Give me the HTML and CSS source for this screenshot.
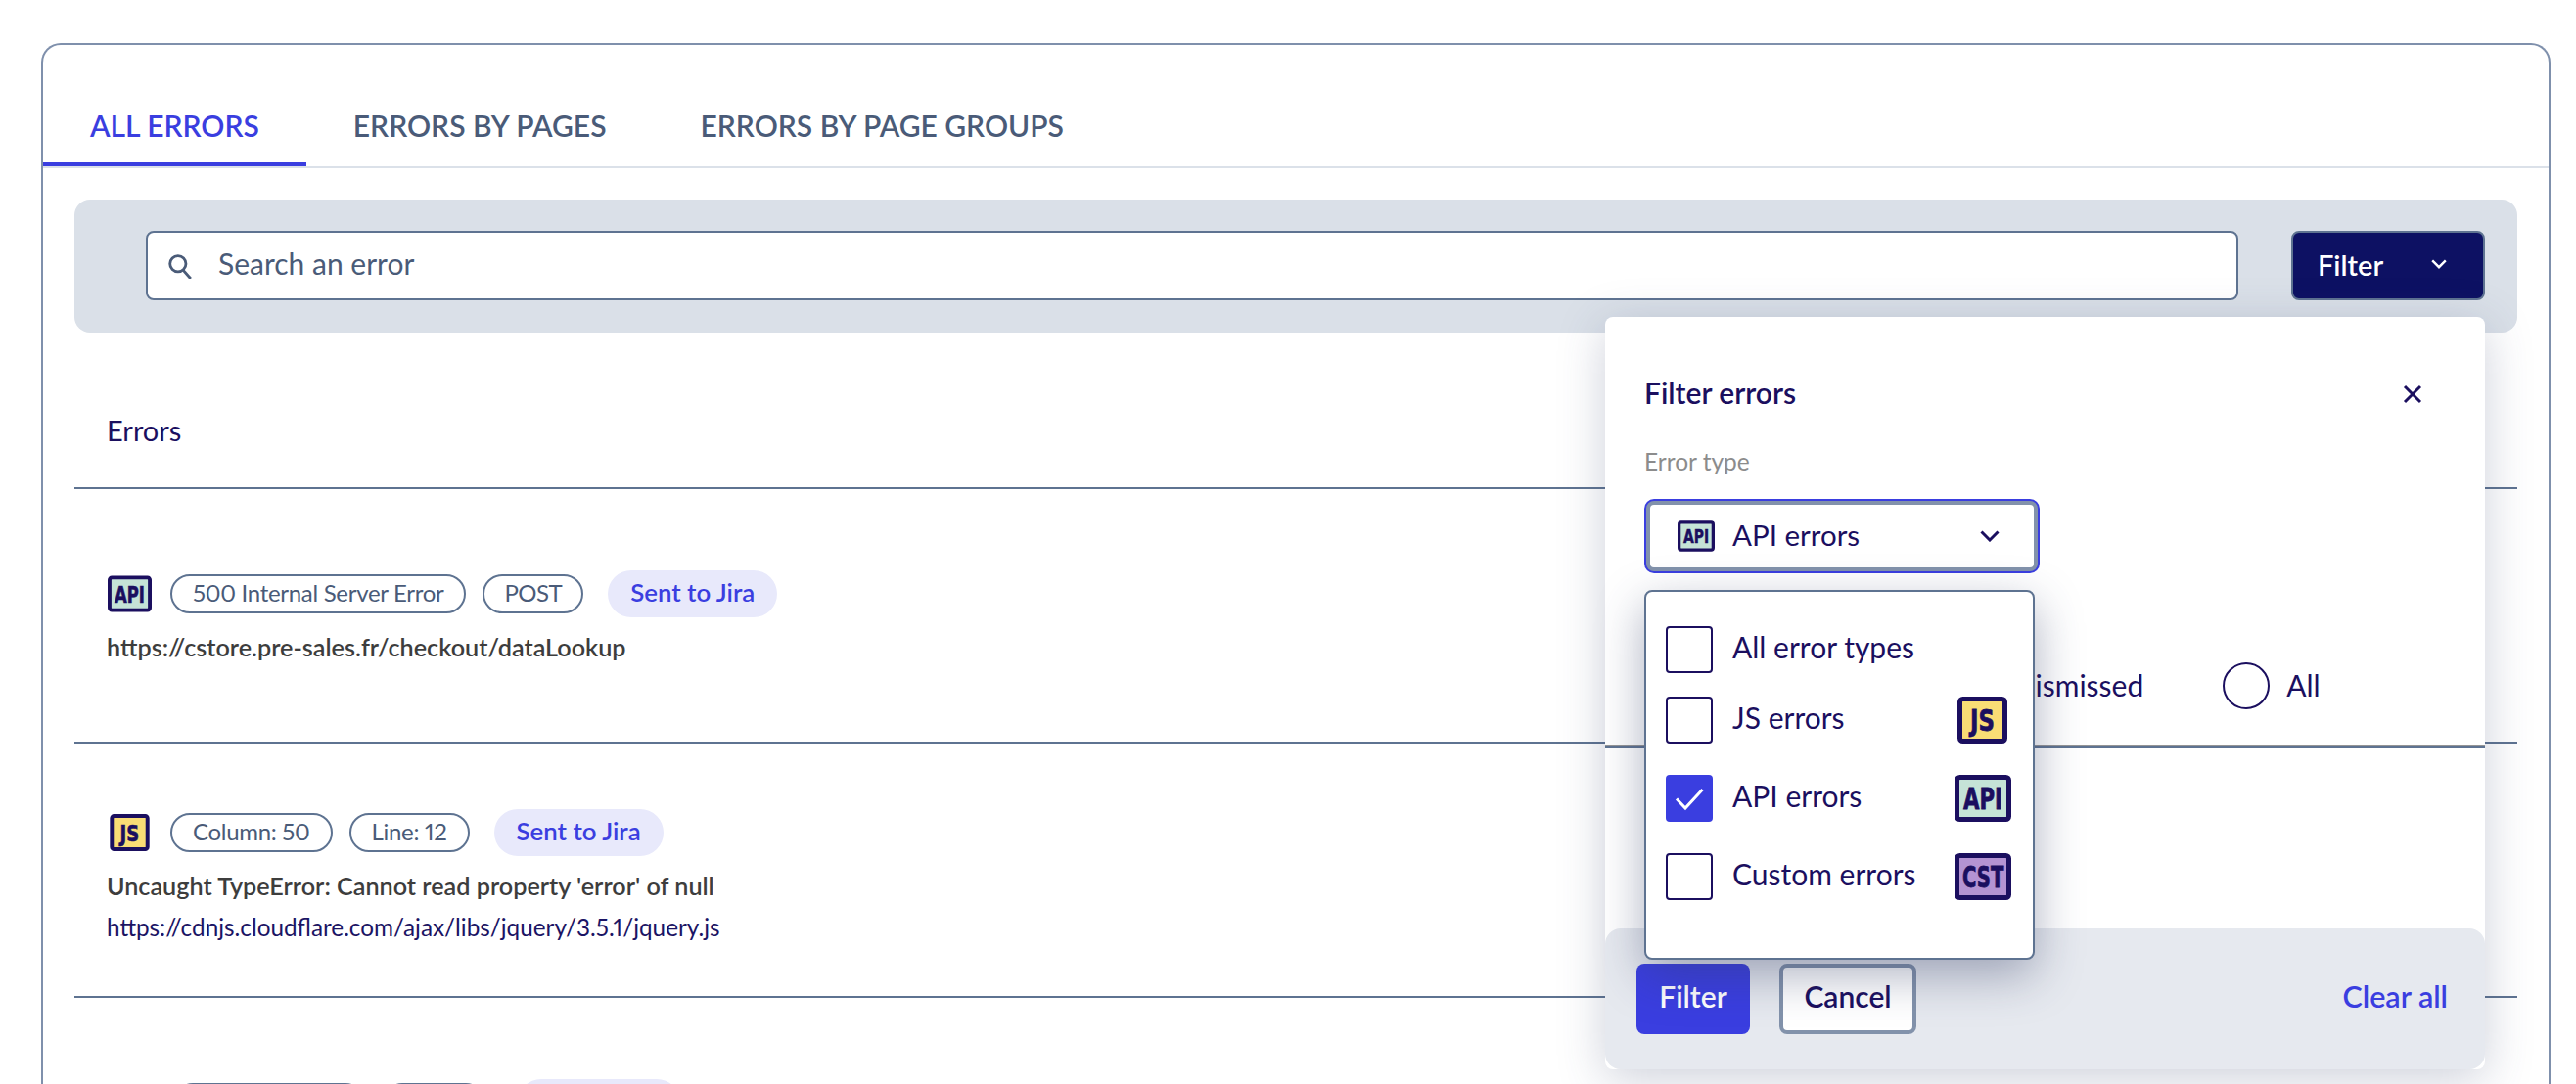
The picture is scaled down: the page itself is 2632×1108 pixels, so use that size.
FILE: index.html
```html
<!DOCTYPE html>
<html lang="en">
<head>
  <meta charset="UTF-8" />
  <title>Errors</title>
  <link rel="stylesheet" href="styles.css">
</head>
<body>
  <div class="card">
    <div class="tabs">
      <a class="tab active">ALL ERRORS</a>
      <a class="tab">ERRORS BY PAGES</a>
      <a class="tab">ERRORS BY PAGE GROUPS</a>
    </div>

    <div class="search-band">
      <div class="search-input">
        <svg class="search-icon" viewBox="0 0 24 24"><circle cx="10" cy="10" r="7.5" fill="none" stroke="currentColor" stroke-width="2.6"/><path d="M15 16l7 8" fill="none" stroke="currentColor" stroke-width="2.6"/></svg>
        <span class="search-text">Search an error</span>
      </div>
      <button class="filter-toggle">
        <span>Filter</span>
        <svg class="filter-chevron" viewBox="0 0 20 12"><path d="M1.5 1.5l8.5 8.5 8.5-8.5" fill="none" stroke="currentColor" stroke-width="3"/></svg>
      </button>
    </div>

    <div class="errors-title">Errors</div>

    <div class="error-row">
      <div class="error-tags">
        <svg class="type-badge badge-row" viewBox="0 0 58 48">
          <rect class="badge-api" x="2.5" y="2.5" width="53" height="43" rx="3"/>
          <text class="badge-text" transform="translate(9 35) scale(.71 1)">API</text>
        </svg>
        <span class="chip">500 Internal Server Error</span>
        <span class="chip chip-post">POST</span>
        <span class="jira">Sent to Jira</span>
      </div>
      <div class="error-message">https://cstore.pre-sales.fr/checkout/dataLookup</div>
    </div>

    <div class="error-row error-row-detail">
      <div class="error-tags">
        <svg class="type-badge badge-row badge-row-js" viewBox="0 0 51 48">
          <rect class="badge-js" x="2.5" y="2.5" width="46" height="43" rx="3"/>
          <text class="badge-text" transform="translate(13 35) scale(.76 1)">JS</text>
        </svg>
        <span class="chip">Column: 50</span>
        <span class="chip">Line: 12</span>
        <span class="jira">Sent to Jira</span>
      </div>
      <div class="error-message">Uncaught TypeError: Cannot read property 'error' of null</div>
      <div class="error-url">https://cdnjs.cloudflare.com/ajax/libs/jquery/3.5.1/jquery.js</div>
    </div>

    <!-- next row is cut by the window, only the tops of its tags show -->
    <div class="error-row">
      <div class="error-tags error-tags-cut">
        <span class="chip chip-long"></span>
        <span class="chip chip-short"></span>
        <span class="jira jira-cut"></span>
      </div>
    </div>
  </div>

  <!-- Filter panel, opened from the Filter button -->
  <div class="filter-panel">
    <div class="panel-body">
      <div class="panel-head">
        <span class="panel-title">Filter errors</span>
        <svg class="panel-close" viewBox="0 0 20 20"><path d="M2 2l16 16M18 2L2 18" fill="none" stroke="currentColor" stroke-width="3"/></svg>
      </div>
      <div class="field-label">Error type</div>
      <div class="select-box">
        <svg class="type-badge badge-select" viewBox="0 0 58 48">
          <rect class="badge-api" x="2.5" y="2.5" width="53" height="43" rx="3"/>
          <text class="badge-text" transform="translate(9 35) scale(.71 1)">API</text>
        </svg>
        <span class="select-value">API errors</span>
        <svg class="select-chevron" viewBox="0 0 20 12"><path d="M1.5 1.5l8.5 8.5 8.5-8.5" fill="none" stroke="currentColor" stroke-width="3"/></svg>
      </div>
      <div class="status-row">
        <label class="radio-item"><span class="radio-text">Dismissed</span></label>
        <label class="radio-item"><span class="radio"></span><span class="radio-text">All</span></label>
      </div>
    </div>
    <div class="panel-footer">
      <button class="btn-primary">Filter</button>
      <button class="btn-cancel">Cancel</button>
      <a class="clear-all">Clear all</a>
    </div>

    <div class="type-menu">
      <div class="type-option"><span class="check"></span><span class="option-label">All error types</span></div>
      <div class="type-option">
        <span class="check"></span><span class="option-label">JS errors</span>
        <svg class="type-badge badge-menu-js" viewBox="0 0 51 48">
          <rect class="badge-js" x="2.5" y="2.5" width="46" height="43" rx="3"/>
          <text class="badge-text" transform="translate(13 35) scale(.76 1)">JS</text>
        </svg>
      </div>
      <div class="type-option">
        <span class="check checked"><svg viewBox="0 0 48 48"><path d="M11 24.5l9 9.5 17.5-19" fill="none" stroke="#fff" stroke-width="3"/></svg></span>
        <span class="option-label">API errors</span>
        <svg class="type-badge" viewBox="0 0 58 48">
          <rect class="badge-api" x="2.5" y="2.5" width="53" height="43" rx="3"/>
          <text class="badge-text" transform="translate(9 35) scale(.71 1)">API</text>
        </svg>
      </div>
      <div class="type-option">
        <span class="check"></span><span class="option-label">Custom errors</span>
        <svg class="type-badge" viewBox="0 0 58 48">
          <rect class="badge-cst" x="2.5" y="2.5" width="53" height="43" rx="3"/>
          <text class="badge-text" transform="translate(8 35) scale(.656 1)">CST</text>
        </svg>
      </div>
    </div>
  </div>
</body>
</html>
```

FILE: styles.css
```css
* {
  margin: 0;
  padding: 0;
  box-sizing: border-box;
}

html, body {
  height: 100%;
  overflow: hidden;
  background-color: #fff;
  font-family: "Lato", "Open Sans", sans-serif;
  font-variant-numeric: proportional-nums;
}

body {
  position: relative;
  padding: 44px 26px 0 42px;
}

button {
  font-family: inherit;
  cursor: pointer;
}

.card {
  height: 1064px;
  overflow: hidden;
  border: 2px solid #7f90ac;
  border-bottom: none;
  border-radius: 20px 20px 0 0;
}

/* Tabs */
.tabs {
  display: flex;
  border-bottom: 2px solid #dbe1e9;
}

.tab {
  padding: 64px 48px 20px;
  border-bottom: 4px solid transparent;
  font-size: 30px;
  line-height: 36px;
  font-weight: 600;
  color: #4a5b78;
}

.tab.active {
  color: #3a3ee0;
  border-bottom-color: #3a3ee0;
}

/* Search */
.search-band {
  display: flex;
  gap: 54px;
  height: 136px;
  margin: 32px 32px 0;
  padding: 32px 33px 33px 73px;
  background-color: #dae0e8;
  border-radius: 16px;
}

.search-input {
  flex: 1;
  display: flex;
  align-items: center;
  padding-left: 20px;
  gap: 26px;
  background-color: #fff;
  border: 2px solid #5e7391;
  border-radius: 8px;
  font-size: 30px;
  color: #4a5b78;
}

.search-text {
  padding-bottom: 5px;
}

.search-icon {
  width: 26px;
  height: 26px;
  color: #4a5b78;
}

.filter-toggle {
  display: flex;
  align-items: center;
  width: 198px;
  padding: 0 0 3px 25px;
  background-color: #0d1163;
  border: 2px solid #5e7391;
  border-radius: 8px;
  color: #fff;
  font-size: 29px;
  font-weight: 600;
}

.filter-chevron {
  width: 16px;
  height: 10px;
  margin-left: 49px;
}

/* Error list */
.errors-title {
  height: 160px;
  margin: 0 32px;
  padding: 82px 0 0 33px;
  border-bottom: 2px solid #5e7391;
  font-size: 29px;
  line-height: 36px;
  color: #1b0f5f;
}

.error-row {
  height: 260px;
  margin: 0 32px;
  padding: 83px 0 0 33px;
  border-bottom: 2px solid #5e7391;
}

.error-row-detail {
  padding-top: 67px;
}

.error-tags {
  display: flex;
  align-items: center;
  height: 48px;
  font-size: 24px;
}

.error-tags-cut {
  padding-left: 68px;
}

.chip {
  display: flex;
  align-items: center;
  flex-shrink: 0;
  height: 40px;
  padding: 0 21px 4px;
  margin-right: 17px;
  border: 2px solid #5e7391;
  border-radius: 20px;
  letter-spacing: -0.3px;
  color: #4a5b78;
}

.chip-post {
  padding: 0 20px 4px;
  letter-spacing: -0.5px;
}

.chip-long {
  width: 196px;
  margin-right: 18px;
}

.chip-short {
  width: 105px;
  margin-right: 25px;
}

.jira {
  display: flex;
  align-items: center;
  flex-shrink: 0;
  height: 48px;
  padding: 0 23px 4px;
  margin-left: 8px;
  border-radius: 24px;
  background-color: #e8e9fb;
  font-size: 25.8px;
  font-weight: 600;
  color: #3a3ee0;
}

.jira-cut {
  width: 166px;
}

.error-message {
  margin-top: 12px;
  font-size: 25.2px;
  line-height: 36px;
  font-weight: 600;
  color: #3d3d3d;
}

.error-url {
  margin-top: 7px;
  font-size: 24.3px;
  line-height: 36px;
  color: #1b1464;
}

/* Error type badges */
.type-badge {
  flex-shrink: 0;
  width: 58px;
  height: 48px;
}

.type-badge rect {
  stroke: #1b0f5f;
  stroke-width: 5px;
}

.badge-api { fill: #c5e3d7; }
.badge-js { fill: #fadd75; }
.badge-cst { fill: #b493d2; }

.badge-text {
  font-family: "DejaVu Sans", sans-serif;
  font-size: 30px;
  font-weight: 700;
  fill: #1b0f5f;
  stroke: #1b0f5f;
  stroke-width: 0.8px;
}

.badge-row {
  width: 45px;
  height: 38px;
  margin: 0 19px 0 1px;
}

.badge-row-js {
  width: 41px;
  margin: 0 21px 0 3px;
}

.badge-select {
  width: 38px;
  height: 32px;
}

.badge-menu-js {
  width: 51px;
  margin-right: 4px;
}

/* Filter panel */
.filter-panel {
  position: absolute;
  left: 1640px;
  top: 324px;
  width: 899px;
  height: 769px;
  display: flex;
  flex-direction: column;
  background-color: #fff;
  border-radius: 8px;
  box-shadow: 0 10px 48px rgba(60, 70, 110, 0.25);
  color: #1b0f5f;
}

.panel-body {
  position: relative;
  flex: 1;
  padding: 60px 40px 0;
}

/* Divider across the panel, under the dropdown */
.panel-body::after {
  content: "";
  position: absolute;
  left: 0;
  right: 0;
  top: 437px;
  height: 0;
  border-top: 2px solid #959595;
  border-bottom: 2px solid #5e7391;
}

.panel-head {
  display: flex;
  align-items: center;
  justify-content: space-between;
  height: 38px;
}

.panel-title {
  padding-bottom: 4px;
  font-size: 30px;
  font-weight: 600;
}

.panel-close {
  width: 20px;
  height: 20px;
  margin-right: 24px;
}

.field-label {
  margin-top: 32px;
  font-size: 24.5px;
  line-height: 36px;
  color: #8c8c8c;
}

.select-box {
  display: flex;
  align-items: center;
  width: 400px;
  height: 72px;
  margin: 22px 0 0 2px;
  padding: 0 35px 0 28px;
  background-color: #fff;
  border: 4px solid #8292ab;
  box-shadow: 0 0 0 2px #3a3ee0;
  border-radius: 8px;
}

.select-value {
  flex: 1;
  margin-left: 18px;
  padding-bottom: 4px;
  font-size: 29.5px;
}

.select-chevron {
  width: 20px;
  height: 12px;
}

.status-row {
  display: flex;
  align-items: center;
  height: 48px;
  margin-top: 93px;
  padding-left: 377px;
  gap: 81px;
  font-size: 30px;
}

.radio-item {
  display: flex;
  align-items: center;
  gap: 17px;
}

.radio-text {
  padding-bottom: 2px;
}

.radio {
  width: 48px;
  height: 48px;
  border: 2px solid #1b0f5f;
  border-radius: 50%;
}

.panel-footer {
  display: flex;
  align-items: center;
  height: 144px;
  padding: 0 38px 0 32px;
  gap: 30px;
  background-color: #e6e9ef;
  border-radius: 16px;
}

.btn-primary,
.btn-cancel {
  height: 72px;
  padding-bottom: 7px;
  border-radius: 8px;
  font-size: 30px;
  font-weight: 600;
}

.btn-primary {
  width: 116px;
  border: none;
  background-color: #3a3ee0;
  color: #fff;
}

.btn-cancel {
  width: 140px;
  border: 4px solid #8292ab;
  background-color: #fff;
  color: #1b0f5f;
}

.clear-all {
  margin-left: auto;
  padding-bottom: 7px;
  font-size: 30.5px;
  font-weight: 600;
  color: #3a3ee0;
}

/* Error type dropdown */
.type-menu {
  position: absolute;
  z-index: 2;
  left: 40px;
  top: 279px;
  width: 399px;
  height: 378px;
  padding: 35px 22px 0 20px;
  background-color: #fff;
  border: 2px solid #5e7391;
  border-radius: 8px;
  box-shadow: 0 16px 48px rgba(50, 60, 100, 0.4);
}

.type-option {
  display: flex;
  align-items: center;
  height: 48px;
  margin-bottom: 32px;
  font-size: 30px;
}

.type-option:first-child {
  margin-bottom: 24px;
}

.check {
  width: 48px;
  height: 48px;
  flex-shrink: 0;
  margin-right: 20px;
  border: 2px solid #1b0f5f;
  border-radius: 4px;
}

.check.checked {
  border: none;
  background-color: #3a3ee0;
}

.check svg {
  display: block;
}

.option-label {
  flex: 1;
  padding-bottom: 6px;
}
```
